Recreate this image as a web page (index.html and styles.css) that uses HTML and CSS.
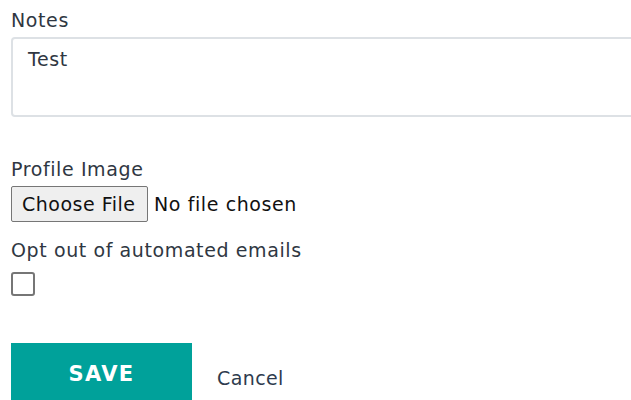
FILE: index.html
```html
<!DOCTYPE html>
<html>
<head>
<meta charset="utf-8">
<link rel="stylesheet" href="styles.css">
</head>
<body>
<form class="form">
  <div class="field">
    <label class="label" for="notes">Notes</label>
    <textarea id="notes" class="textarea">Test</textarea>
  </div>
  <div class="field field-file">
    <label class="label" for="avatar">Profile Image</label>
    <div class="file">
      <span class="file-btn">Choose File</span>
      <span class="file-name">No file chosen</span>
    </div>
  </div>
  <div class="field field-check">
    <label class="label" for="optout">Opt out of automated emails</label>
    <span class="checkbox" id="optout"></span>
  </div>
  <div class="actions">
    <button type="button" class="btn-save">SAVE</button>
    <a class="cancel" href="#">Cancel</a>
  </div>
</form>
</body>
</html>
```
FILE: styles.css
```css
html, body {
  margin: 0;
  padding: 0;
  background: #fff;
}
body {
  font-family: "DejaVu Sans", sans-serif;
  color: #2f3742;
  overflow: hidden;
}
.form {
  padding: 8px 0 0 11px;
  display: flex;
  flex-direction: column;
}
.label {
  display: block;
  font-size: 19px;
  line-height: 24px;
  letter-spacing: 0.6px;
  color: #2f3742;
}
.textarea {
  display: block;
  margin-top: 5px;
  width: 640px;
  height: 80px;
  box-sizing: border-box;
  border: 2px solid #dde1e5;
  border-radius: 4px;
  padding: 9px 15px;
  font-family: "DejaVu Sans", sans-serif;
  font-size: 19px;
  letter-spacing: 0.6px;
  color: #2f3742;
  resize: none;
  outline: none;
}
.field-file {
  margin-top: 40px;
}
.file {
  display: flex;
  align-items: center;
  margin-top: 5px;
}
.file-btn {
  box-sizing: border-box;
  width: 137px;
  height: 36px;
  padding: 0 0 0 10px;
  display: flex;
  align-items: center;
  background: #efefef;
  border: 1px solid #767676;
  border-radius: 2px;
  font-size: 19px;
  letter-spacing: 0.5px;
  color: #111;
}
.file-name {
  margin-left: 6px;
  font-size: 19px;
  letter-spacing: 0.6px;
  color: #111;
}
.field-check {
  margin-top: 16px;
}
.checkbox {
  display: block;
  margin-top: 10px;
  width: 24px;
  height: 24px;
  box-sizing: border-box;
  border: 2px solid #767676;
  border-radius: 3px;
  background: #fff;
}
.actions {
  margin-top: 47px;
  display: flex;
  align-items: flex-start;
}
.btn-save {
  width: 181px;
  height: 66px;
  border: 0;
  border-radius: 0;
  background: #00a19a;
  color: #fff;
  font-family: "DejaVu Sans", sans-serif;
  font-weight: bold;
  font-size: 21px;
  letter-spacing: 1.4px;
  padding: 20px 0 0 0;
  line-height: 22px;
  display: flex;
  justify-content: center;
  align-items: flex-start;
}
.cancel {
  margin-top: 23px;
  margin-left: 25px;
  font-size: 19px;
  line-height: 24px;
  letter-spacing: 0.4px;
  color: #2e3b4e;
  text-decoration: none;
}
```
